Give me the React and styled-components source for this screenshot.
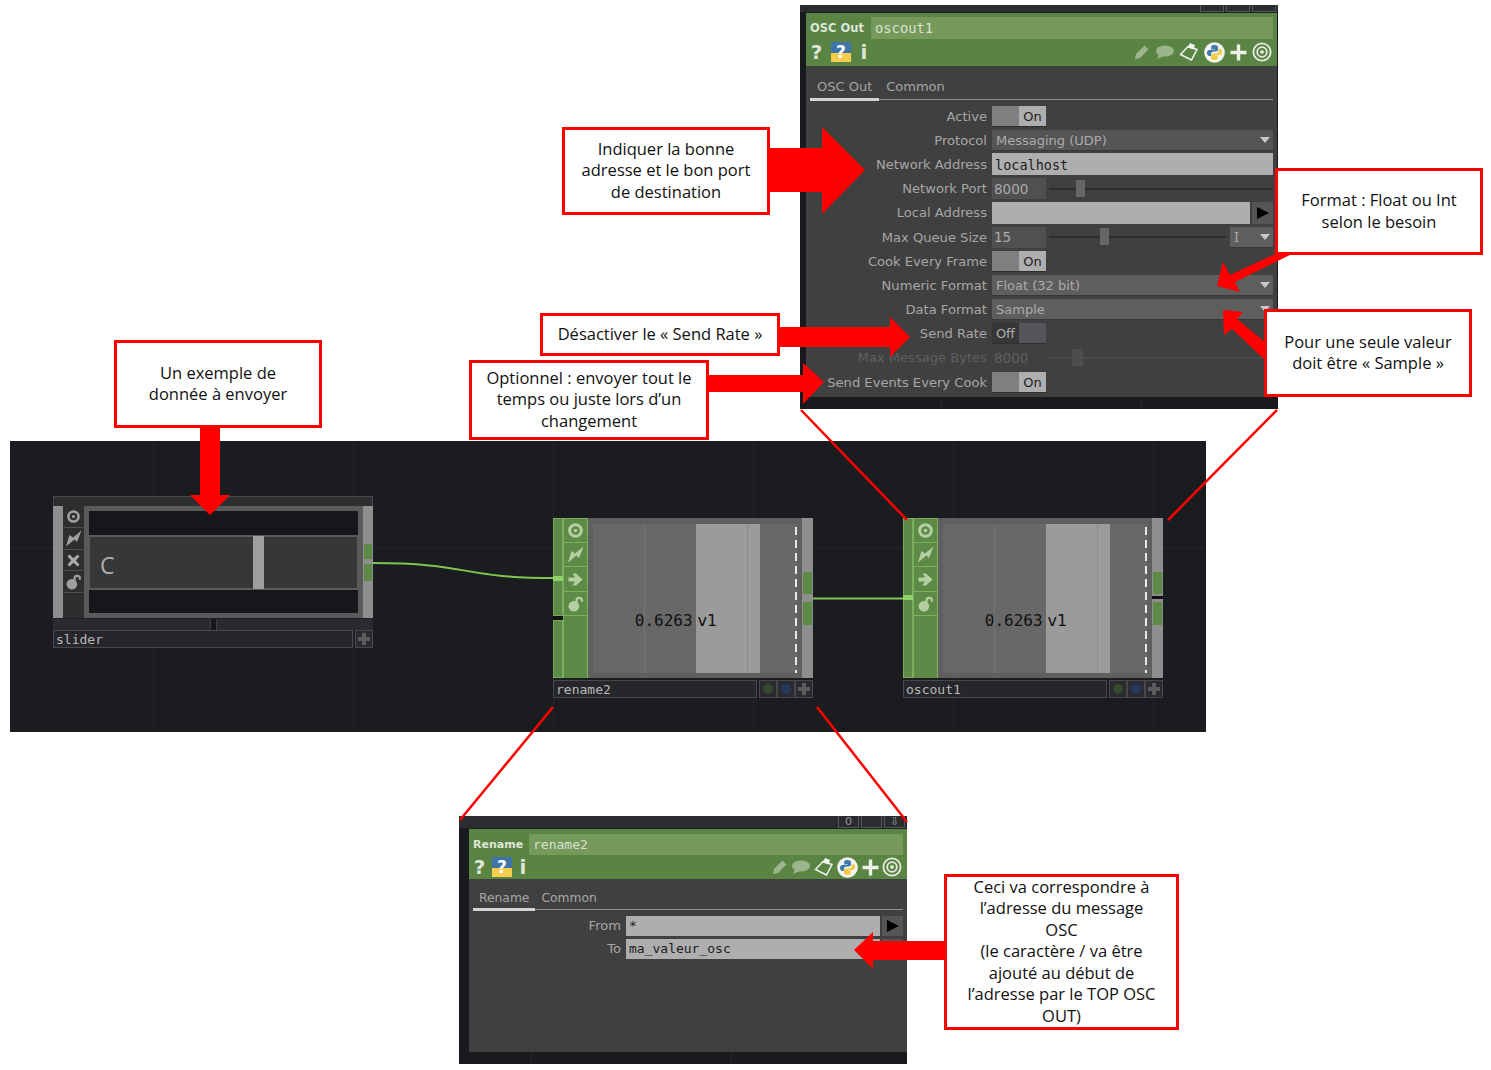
import React from "react";
import styled, { createGlobalStyle } from "styled-components";

const GlobalStyle = createGlobalStyle`
  html, body {
    margin: 0;
    padding: 0;
    background: #fff;
  }
  * {
    box-sizing: border-box;
  }
`;

const Page = styled.div`
  position: relative;
  width: 1491px;
  height: 1070px;
  overflow: hidden;
  background: #fff;
  font-family: "DejaVu Sans", sans-serif;
`;

/* ---------- annotation boxes and arrows ---------- */

const Callout = styled.div`
  position: absolute;
  left: ${(p) => p.$x}px;
  top: ${(p) => p.$y}px;
  width: ${(p) => p.$w}px;
  height: ${(p) => p.$h}px;
  display: flex;
  align-items: center;
  justify-content: center;
  text-align: center;
  padding-bottom: 2px;
  background: #fff;
  border: 3px solid #f00;
  color: #111;
  font-family: "Open Sans", sans-serif;
  font-size: 16.5px;
  line-height: 21.5px;
  white-space: nowrap;
  z-index: 5;
`;

const Overlay = styled.svg`
  position: absolute;
  left: 0;
  top: 0;
  z-index: 4;
  pointer-events: none;
`;

const Wires = styled.svg`
  position: absolute;
  left: 0;
  top: 0;
  z-index: 1;
  pointer-events: none;
`;

/* ---------- parameter window ---------- */

const ParamWindow = styled.div`
  position: absolute;
  left: ${(p) => p.$x}px;
  top: ${(p) => p.$y}px;
  width: ${(p) => p.$w}px;
  height: ${(p) => p.$h}px;
  display: flex;
  flex-direction: column;
  background: #191a1e;
`;

const TitleBar = styled.div`
  height: ${(p) => p.$h}px;
  flex: none;
  display: flex;
  justify-content: flex-end;
  gap: 2px;
  padding-right: 2px;
  background: #2b2c30;
  border-bottom: 1px solid #1d1e21;
`;

const TitleButton = styled.div`
  width: ${(p) => p.$w}px;
  display: flex;
  align-items: flex-end;
  justify-content: center;
  border: 1px solid #55565b;
  border-top: none;
  color: #9a9a9a;
  font-size: 11px;
  line-height: 11px;
`;

const BottomStrip = styled.div`
  flex: none;
  height: 12px;
  background-color: #191a1e;
  background-image: linear-gradient(90deg, #25262b 1px, transparent 1px);
  background-size: 200px 100%;
  background-position: ${(p) => p.$offset}px 0;
`;

const WindowMain = styled.div`
  flex: 1;
  display: flex;
  min-height: 0;
  padding-left: ${(p) => p.$gutter}px;
  padding-right: ${(p) => p.$right}px;
`;

const WindowContent = styled.div`
  flex: 1;
  display: flex;
  flex-direction: column;
  background: #404040;
`;

const Header = styled.div`
  flex: none;
  height: ${(p) => p.$h}px;
  background: #5a8444;
  padding: ${(p) => p.$top}px 4px 0 4px;
  color: #dfe6d9;
`;

const NameRow = styled.div`
  display: flex;
  align-items: center;
  gap: 6px;
  height: ${(p) => p.$h}px;
`;

const OpType = styled.div`
  width: ${(p) => p.$w}px;
  font-size: ${(p) => p.$size}px;
  font-weight: 700;
  white-space: nowrap;
`;

const OpName = styled.div`
  flex: 1;
  height: 100%;
  display: flex;
  align-items: center;
  padding-left: 4px;
  background: #759a5c;
  color: #d8e0d0;
  font-family: "DejaVu Sans Mono", monospace;
  font-size: ${(p) => p.$size}px;
`;

const ToolRow = styled.div`
  display: flex;
  align-items: center;
  justify-content: space-between;
  height: 26px;
  padding: 0 1px;
  margin-top: ${(p) => p.$shift}px;
`;

const ToolGroup = styled.div`
  display: flex;
  align-items: center;
  gap: ${(p) => p.$gap}px;
`;

const HelpGlyph = styled.span`
  font-size: 20px;
  font-weight: 700;
  line-height: 20px;
  width: ${(p) => p.$w}px;
  display: flex;
  justify-content: center;
  color: #dfe6d9;
`;

const PythonTile = styled.div`
  width: 20px;
  height: 20px;
  display: flex;
  align-items: center;
  justify-content: center;
  background: linear-gradient(#3d75a8 0 55%, #f6cd4c 55% 100%);
  color: #fff;
  font-size: 17px;
  font-weight: 700;
`;

const Tabs = styled.div`
  flex: none;
  display: flex;
  height: ${(p) => p.$h}px;
  margin: 0 4px;
  align-items: flex-end;
  border-bottom: 1px solid #8c8c8c;
  font-size: ${(p) => p.$size}px;
  color: #a6a6a6;
`;

const Tab = styled.div`
  height: 100%;
  display: flex;
  align-items: center;
  padding: 6px ${(p) => p.$pad}px 0 ${(p) => p.$pad}px;
  border-bottom: ${(p) => (p.$active ? "3px solid #d4d4d4" : "none")};
  margin-bottom: -2px;
  padding-bottom: ${(p) => (p.$active ? "0" : "3px")};
`;

const ParamList = styled.div`
  display: grid;
  grid-auto-rows: ${(p) => p.$rowH}px;
  padding: ${(p) => p.$top}px 4px 0 0;
`;

const ParamRowBox = styled.div`
  display: grid;
  grid-template-columns: ${(p) => p.$label}px 1fr;
  column-gap: 5px;
  align-items: center;
`;

const ParamLabel = styled.div`
  text-align: right;
  font-size: 13.1px;
  white-space: nowrap;
  color: ${(p) => (p.$dim ? "#5f5f5f" : "#a6a6a6")};
`;

const ParamValue = styled.div`
  display: flex;
  align-items: center;
  gap: 2px;
  min-width: 0;
`;

const ToggleBox = styled.div`
  width: 54px;
  height: 21px;
  display: flex;
  font-size: 13px;
  border: 1px solid #2f2f2f;
  border-width: 0 0 1px 0;
`;

const ToggleHalf = styled.div`
  flex: 1;
  display: flex;
  align-items: center;
  justify-content: center;
  padding-top: 1px;
  background: ${(p) => p.$bg};
  color: ${(p) => p.$color || "#222"};
`;

const SelectBox = styled.div`
  flex: 1;
  height: 21px;
  position: relative;
  display: flex;
  align-items: center;
  padding: 1px 0 0 4px;
  background: ${(p) => p.$bg || "#5e5e5e"};
  border: 1px solid #383838;
  border-width: 0 0 1px 0;
  color: #ababab;
  font-size: 13px;
  &::after {
    content: "";
    position: absolute;
    right: 3px;
    top: 7px;
    border-style: solid;
    border-width: 6px 5.5px 0 5.5px;
    border-color: #c8c8c8 transparent transparent transparent;
  }
`;

const SmallSelect = styled(SelectBox)`
  flex: none;
  width: 43px;
  margin-left: 2px;
  font-family: "DejaVu Serif", serif;
`;

const TextField = styled.div`
  flex: 1;
  height: ${(p) => p.$h || 22}px;
  display: flex;
  align-items: center;
  padding: ${(p) => (p.$h ? 0 : 1)}px 0 0 3px;
  background: #aeaeae;
  color: #1d1d1d;
  font-family: "DejaVu Sans Mono", monospace;
  font-size: ${(p) => p.$size || 13.5}px;
  overflow: hidden;
`;

const RunButton = styled.div`
  flex: none;
  width: 21px;
  height: ${(p) => p.$h || 22}px;
  display: flex;
  align-items: center;
  justify-content: center;
  background: #555;
  &::before {
    content: "";
    border-style: solid;
    border-width: 6px 0 6px 12px;
    border-color: transparent transparent transparent #000;
  }
`;

const NumField = styled.div`
  flex: none;
  width: 54px;
  height: 21px;
  display: flex;
  align-items: center;
  padding-left: 2px;
  background: ${(p) => (p.$dim ? "transparent" : "#505050")};
  color: ${(p) => (p.$dim ? "#5f5f5f" : "#ababab")};
  font-size: 13.5px;
`;

const SliderTrack = styled.div`
  flex: 1;
  height: 2px;
  margin-left: 1px;
  position: relative;
  background: ${(p) => (p.$dim ? "#4a4a4a" : "#2d2d2d")};
`;

const SliderThumb = styled.div`
  position: absolute;
  left: ${(p) => p.$at}px;
  top: -8px;
  width: ${(p) => p.$w || 9}px;
  height: 17px;
  background: ${(p) => (p.$dim ? "#4d4d4d" : "#666")};
`;

const ParamRow = ({ label, dim, width, children }) => (
  <ParamRowBox $label={width}>
    <ParamLabel $dim={dim}>{label}</ParamLabel>
    <ParamValue>{children}</ParamValue>
  </ParamRowBox>
);

const ToggleOn = () => (
  <ToggleBox>
    <ToggleHalf $bg="#7f7f7f" />
    <ToggleHalf $bg="#aeaeae">On</ToggleHalf>
  </ToggleBox>
);

const ToggleOff = () => (
  <ToggleBox>
    <ToggleHalf $bg="#363636" $color="#b0b0b0">Off</ToggleHalf>
    <ToggleHalf $bg="#55555c" />
  </ToggleBox>
);

/* ---------- little drawings ---------- */

const TargetIcon = ({ size = 20, color = "#e6ebe2", ring = 1.8 }) => (
  <svg width={size} height={size} viewBox="0 0 20 20" fill="none" stroke={color}>
    <circle cx="10" cy="10" r="8.6" strokeWidth={ring} />
    <circle cx="10" cy="10" r="4.8" strokeWidth="1.8" />
    <circle cx="10" cy="10" r="1.6" fill={color} strokeWidth="0.6" />
  </svg>
);

const NodeTarget = ({ size, color }) => (
  <svg width={size} height={size} viewBox="0 0 20 20" fill="none" stroke={color}>
    <circle cx="10" cy="10" r="7.8" strokeWidth="4" />
    <circle cx="10" cy="10" r="2.4" fill={color} strokeWidth="0" />
  </svg>
);

const PencilIcon = () => (
  <svg width="16" height="16" viewBox="0 0 16 16" fill="#9db58c">
    <path d="M1 15 L2 10 L10.5 1.5 L14.5 5.5 L6 14 Z" />
  </svg>
);

const BubbleIcon = () => (
  <svg width="19" height="14" viewBox="0 0 19 14" fill="#9db58c">
    <ellipse cx="10" cy="6" rx="9" ry="5.5" />
    <path d="M4 9 L2 14 L9 11 Z" />
  </svg>
);

const ClipboardIcon = () => (
  <svg width="20" height="18" viewBox="0 0 20 18" fill="none" stroke="#f2f4ef" strokeWidth="1.5">
    <path d="M1.5 11.5 L9 3.5 L18 6.5 L12.5 17 Z" />
    <path d="M9.5 4 L11.5 1 L15 2.5 L14.5 5.5 Z" fill="#f2f4ef" />
  </svg>
);

const PythonIcon = () => (
  <svg width="21" height="21" viewBox="0 0 21 21">
    <circle cx="10.5" cy="10.5" r="10.3" fill="#f4f4ee" />
    <path d="M10.4 3 C7.6 3 7.2 4.2 7.2 5.4 V7.4 H10.8 V8.1 H5.6 C4 8.1 3 9.2 3 11 C3 12.8 4 13.9 5.4 13.9 H6.9 V12 C6.9 10.6 8 9.6 9.4 9.6 H12 C13.2 9.6 14 8.8 14 7.6 V5.4 C14 4 12.8 3 10.4 3 Z" fill="#3d78ad" />
    <path d="M10.6 18 C13.4 18 13.8 16.8 13.8 15.6 V13.6 H10.2 V12.9 H15.4 C17 12.9 18 11.8 18 10 C18 8.2 17 7.1 15.6 7.1 H14.8 V9 C14.8 10.4 13.7 11.4 12.3 11.4 H9 C7.8 11.4 7 12.2 7 13.4 V15.6 C7 17 8.2 18 10.6 18 Z" fill="#f5c93d" />
  </svg>
);

const PlusIcon = () => (
  <svg width="17" height="17" viewBox="0 0 17 17" fill="#eef1ea">
    <path d="M6.8 0.5 H10.2 V6.8 H16.5 V10.2 H10.2 V16.5 H6.8 V10.2 H0.5 V6.8 H6.8 Z" />
  </svg>
);

const BoltIcon = ({ color }) => (
  <svg width="17" height="17" viewBox="0 0 17 17" fill={color}>
    <path d="M16.5 0.5 L12 12 L9.5 9.5 L1 16.5 L4.5 5 L8 7.5 Z" />
  </svg>
);

const ArrowIcon = ({ color }) => (
  <svg width="15" height="15" viewBox="0 0 15 15" fill={color}>
    <path d="M0.5 5.5 H7 L4.5 1.5 H8 L14.5 7.5 L8 13.5 H4.5 L7 9.5 H0.5 Z" />
  </svg>
);

const CrossIcon = ({ color }) => (
  <svg width="13" height="13" viewBox="0 0 13 13" fill={color}>
    <path d="M2.5 0.5 L6.5 4.2 L10.5 0.5 L12.5 2.5 L8.8 6.5 L12.5 10.5 L10.5 12.5 L6.5 8.8 L2.5 12.5 L0.5 10.5 L4.2 6.5 L0.5 2.5 Z" />
  </svg>
);

const LockIcon = ({ color }) => (
  <svg width="16" height="16" viewBox="0 0 15 15">
    <circle cx="5.5" cy="9.6" r="5" fill={color} />
    <path d="M8 6.5 V4 C8 1 13 1 13 4 V5.5" fill="none" stroke={color} strokeWidth="2" />
  </svg>
);

const HeaderTools = ({ leftGap, rightGap, shift }) => (
  <ToolRow $shift={shift}>
    <ToolGroup $gap={leftGap}>
      <HelpGlyph $w={11}>?</HelpGlyph>
      <PythonTile>?</PythonTile>
      <HelpGlyph $w={8}>i</HelpGlyph>
    </ToolGroup>
    <ToolGroup $gap={rightGap}>
      <PencilIcon />
      <BubbleIcon />
      <ClipboardIcon />
      <PythonIcon />
      <PlusIcon />
      <TargetIcon size={20} />
    </ToolGroup>
  </ToolRow>
);

/* ---------- network editor and nodes ---------- */

const NetworkEditor = styled.div`
  position: absolute;
  left: 10px;
  top: 441px;
  width: 1196px;
  height: 291px;
  background-color: #1b1c20;
  background-image:
    linear-gradient(90deg, #25262b 1px, transparent 1px),
    linear-gradient(#25262b 1px, transparent 1px);
  background-size: 200px 200px;
  background-position: 143px 107px;
`;

const OpNode = styled.div`
  position: absolute;
  left: ${(p) => p.$x}px;
  top: ${(p) => p.$y}px;
  width: ${(p) => p.$w}px;
  display: flex;
  flex-direction: column;
  z-index: 2;
`;

const OpBody = styled.div`
  height: ${(p) => p.$h}px;
  display: flex;
  background: #5f5f5f;
`;

const LeftStrip = styled.div`
  flex: none;
  width: 10px;
  display: flex;
  flex-direction: column;
  gap: ${(p) => p.$gap || 0}px;
  background: #111;
`;

const StripPiece = styled.div`
  position: relative;
  flex: ${(p) => (p.$h ? `0 0 ${p.$h}px` : 1)};
  background: #5d8a47;
  border: 1px solid #76ad58;
`;

const StripHighlight = styled.div`
  position: absolute;
  left: -1px;
  right: -1px;
  top: ${(p) => p.$top}px;
  height: 5px;
  background: #8ed269;
`;

const IconColumn = styled.div`
  flex: none;
  width: ${(p) => p.$w}px;
  display: flex;
  flex-direction: column;
  background: ${(p) => p.$bg};
  border: ${(p) => p.$line} solid 1px;
  border-top: none;
  border-bottom: none;
`;

const IconCell = styled.div`
  flex: none;
  height: ${(p) => p.$h}px;
  display: flex;
  align-items: center;
  justify-content: center;
  border-bottom: 1px solid ${(p) => p.$line};
  border-top: ${(p) => (p.$first ? `1px solid ${p.$line}` : "none")};
`;

const Viewer = styled.div`
  flex: 1;
  padding: 6px 5px 5px 5px;
  min-width: 0;
`;

const Chart = styled.div`
  position: relative;
  height: 100%;
  display: flex;
  align-items: center;
  justify-content: center;
  padding: 44px 38px 0 0;
  background:
    linear-gradient(90deg,
      transparent 51px, #757575 51px 52px, transparent 52px 103px,
      #9b9b9b 103px 154px, #8b8b8b 154px 155px, #9b9b9b 155px 167px, transparent 167px),
    #686868;
  &::after {
    content: "";
    position: absolute;
    right: 0;
    top: 3px;
    bottom: 0;
    width: 2px;
    background: repeating-linear-gradient(#e8e8e8 0 8px, transparent 8px 13px);
  }
`;

const ChartValue = styled.div`
  color: #111;
  font-size: 16px;
  white-space: nowrap;
  span {
    font-family: "DejaVu Sans Mono", monospace;
    font-size: 16px;
    margin-right: 5px;
  }
`;

const RightStrip = styled.div`
  flex: none;
  width: 11px;
  display: flex;
  flex-direction: column;
  gap: ${(p) => p.$gap}px;
  padding: ${(p) => p.$top}px 1px 0 1px;
  background: #8e8e8e;
  position: relative;
`;

const Output = styled.div`
  flex: none;
  height: ${(p) => p.$h}px;
  background: #5d8a47;
`;

const OutputGap = styled.div`
  position: absolute;
  left: 0;
  right: 0;
  top: ${(p) => p.$top}px;
  height: 3px;
  background: #111;
`;

const NameBar = styled.div`
  display: flex;
  height: 18px;
  margin-top: ${(p) => p.$top}px;
`;

const NameField = styled.div`
  flex: 1;
  display: flex;
  align-items: center;
  padding-left: 2px;
  margin-right: 2px;
  border: 1px solid #47484c;
  background: #26272a;
  color: #b8b8b8;
  font-family: "DejaVu Sans Mono", monospace;
  font-size: 13px;
`;

const NameCell = styled.div`
  flex: none;
  width: 18px;
  display: flex;
  align-items: center;
  justify-content: center;
  border: 1px solid #47484c;
  background: #2a2b2e;
`;

const Dot = styled.div`
  width: 10px;
  height: 10px;
  border-radius: 50%;
  background: ${(p) => p.$c};
`;

const CellPlus = styled.div`
  width: 12px;
  height: 12px;
  background:
    linear-gradient(#5c5c5c, #5c5c5c) center / 12px 4px no-repeat,
    linear-gradient(#5c5c5c, #5c5c5c) center / 4px 12px no-repeat;
`;

/* slider node parts */
const SliderCap = styled.div`
  height: 10px;
  background: #2e2e30;
  border: 1px solid #47484c;
  border-bottom: none;
`;

const GreyStrip = styled.div`
  flex: none;
  width: 10px;
  background: #8e8e8e;
`;

const SliderOutputs = styled(RightStrip)`
  width: 10px;
`;

const SliderViewer = styled.div`
  flex: 1;
  display: flex;
  flex-direction: column;
  padding: 5px;
  background: #5a5a5a;
  gap: 1px;
`;

const SliderBand = styled.div`
  flex: 1;
  background: #16171b;
`;

const SliderBody = styled.div`
  flex: 0 0 53px;
  display: flex;
  align-items: center;
  position: relative;
  padding: 5px 0 0 10px;
  background: #373737;
  border: 1px solid #5a5a5a;
  color: #b0b0b0;
  font-family: "Open Sans", sans-serif;
  font-size: 23px;
`;

const SliderKnob = styled.div`
  position: absolute;
  left: 163px;
  top: -1px;
  bottom: -1px;
  width: 11px;
  background: #9e9e9e;
`;

const SliderFoot = styled.div`
  height: 12px;
  display: flex;
  justify-content: center;
  background: #2a2b2e;
  border-top: 1px solid #1e1f22;
`;

const FootHandle = styled.div`
  width: 7px;
  background: #17181b;
  border: solid #3e3e40;
  border-width: 0 1px;
`;

const lineGreen = "#7cb25c";
const iconGreen = "#b4d0a2";

const ViewerNode = ({ x, name, inputs, outputs }) => (
  <OpNode $x={x} $y={77} $w={260}>
    <OpBody $h={160}>
      <LeftStrip $gap={inputs.gap}>
        {inputs.pieces.map((piece, i) => (
          <StripPiece key={i} $h={piece.h}>
            {piece.glow !== undefined && <StripHighlight $top={piece.glow} />}
          </StripPiece>
        ))}
      </LeftStrip>
      <IconColumn $w={25} $bg="#5d8a47" $line={lineGreen}>
        <IconCell $h={25} $line={lineGreen} $first><NodeTarget size={15} color={iconGreen} /></IconCell>
        <IconCell $h={24} $line={lineGreen}><BoltIcon color={iconGreen} /></IconCell>
        <IconCell $h={25} $line={lineGreen}><ArrowIcon color={iconGreen} /></IconCell>
        <IconCell $h={24} $line={lineGreen}><LockIcon color={iconGreen} /></IconCell>
      </IconColumn>
      <Viewer>
        <Chart>
          <ChartValue><span>0.6263</span>v1</ChartValue>
        </Chart>
      </Viewer>
      <RightStrip $gap={8} $top={54}>
        <Output $h={22} />
        <Output $h={23} />
        {outputs.gap && <OutputGap $top={78} />}
      </RightStrip>
    </OpBody>
    <NameBar $top={2}>
      <NameField>{name}</NameField>
      <NameCell><Dot $c="#36492f" /></NameCell>
      <NameCell><Dot $c="#25395f" /></NameCell>
      <NameCell><CellPlus /></NameCell>
    </NameBar>
  </OpNode>
);

const SliderNode = () => (
  <OpNode $x={43} $y={55} $w={320}>
    <SliderCap />
    <OpBody $h={112}>
      <GreyStrip />
      <IconColumn $w={21} $bg="#2e2e2e" $line="#2e2e2e">
        <IconCell $h={22} $line="#515151"><NodeTarget size={13} color="#a0a0a0" /></IconCell>
        <IconCell $h={22} $line="#515151"><BoltIcon color="#a0a0a0" /></IconCell>
        <IconCell $h={21} $line="#515151"><CrossIcon color="#a8a8a8" /></IconCell>
        <IconCell $h={22} $line="#515151"><LockIcon color="#a0a0a0" /></IconCell>
      </IconColumn>
      <SliderViewer>
        <SliderBand />
        <SliderBody>
          C
          <SliderKnob />
        </SliderBody>
        <SliderBand />
      </SliderViewer>
      <SliderOutputs $gap={5} $top={38}>
        <Output $h={15} />
        <Output $h={17} />
      </SliderOutputs>
    </OpBody>
    <SliderFoot>
      <FootHandle />
    </SliderFoot>
    <NameBar $top={0}>
      <NameField>slider</NameField>
      <NameCell><CellPlus /></NameCell>
    </NameBar>
  </OpNode>
);

const App = () => (
  <Page>
    <GlobalStyle />

    <NetworkEditor>
      <SliderNode />
      <ViewerNode
        x={543}
        name="rename2"
        inputs={{
          gap: 4,
          pieces: [{ h: 98, glow: 57 }, {}],
        }}
        outputs={{ gap: false }}
      />
      <ViewerNode
        x={893}
        name="oscout1"
        inputs={{ gap: 0, pieces: [{ glow: 76 }] }}
        outputs={{ gap: true }}
      />
    </NetworkEditor>

    <Wires width="1491" height="1070">
      <path d="M372 563 C470 563 460 578 554 578" fill="none" stroke="#80c552" strokeWidth="2" />
      <path d="M813 598.5 H904" fill="none" stroke="#80c552" strokeWidth="2" />
    </Wires>

    <ParamWindow $x={800} $y={5} $w={478} $h={404}>
      <TitleBar $h={8}>
        <TitleButton $w={24} />
        <TitleButton $w={24} />
        <TitleButton $w={24} />
      </TitleBar>
      <WindowMain $gutter={6} $right={1}>
        <WindowContent>
          <Header $h={53} $top={4}>
            <NameRow $h={22}>
              <OpType $w={55} $size={11.5}>OSC Out</OpType>
              <OpName $size={13.8}>oscout1</OpName>
            </NameRow>
            <HeaderTools leftGap={9} rightGap={5} shift={0} />
          </Header>
          <Tabs $h={34} $size={13}>
            <Tab $active $pad={7}>OSC Out</Tab>
            <Tab $pad={7}>Common</Tab>
          </Tabs>
          <ParamList $top={4} $rowH={24.2}>
            <ParamRow width={181} label="Active"><ToggleOn /></ParamRow>
            <ParamRow width={181} label="Protocol"><SelectBox $bg="#555">Messaging (UDP)</SelectBox></ParamRow>
            <ParamRow width={181} label="Network Address"><TextField>localhost</TextField></ParamRow>
            <ParamRow width={181} label="Network Port">
              <NumField>8000</NumField>
              <SliderTrack><SliderThumb $at={27} /></SliderTrack>
            </ParamRow>
            <ParamRow width={181} label="Local Address"><TextField /><RunButton /></ParamRow>
            <ParamRow width={181} label="Max Queue Size">
              <NumField>15</NumField>
              <SliderTrack><SliderThumb $at={51} /></SliderTrack>
              <SmallSelect $bg="#5e5e5e">I</SmallSelect>
            </ParamRow>
            <ParamRow width={181} label="Cook Every Frame"><ToggleOn /></ParamRow>
            <ParamRow width={181} label="Numeric Format"><SelectBox>Float (32 bit)</SelectBox></ParamRow>
            <ParamRow width={181} label="Data Format"><SelectBox>Sample</SelectBox></ParamRow>
            <ParamRow width={181} label="Send Rate"><ToggleOff /></ParamRow>
            <ParamRow width={181} label="Max Message Bytes" dim>
              <NumField $dim>8000</NumField>
              <SliderTrack $dim><SliderThumb $dim $at={23} $w={11} /></SliderTrack>
            </ParamRow>
            <ParamRow width={181} label="Send Events Every Cook"><ToggleOn /></ParamRow>
          </ParamList>
        </WindowContent>
      </WindowMain>
      <BottomStrip $offset={141} />
    </ParamWindow>

    <ParamWindow $x={459} $y={816} $w={448} $h={248}>
      <TitleBar $h={13}>
        <TitleButton $w={21}>0</TitleButton>
        <TitleButton $w={21} />
        <TitleButton $w={21}>⇩</TitleButton>
      </TitleBar>
      <WindowMain $gutter={10} $right={0}>
        <WindowContent>
          <Header $h={50} $top={5}>
            <NameRow $h={21}>
              <OpType $w={50} $size={11}>Rename</OpType>
              <OpName $size={13}>rename2</OpName>
            </NameRow>
            <HeaderTools leftGap={7} rightGap={3.5} shift={-1} />
          </Header>
          <Tabs $h={31} $size={12.3}>
            <Tab $active $pad={6}>Rename</Tab>
            <Tab $pad={6}>Common</Tab>
          </Tabs>
          <ParamList $top={4} $rowH={23}>
            <ParamRow width={152} label="From"><TextField $h={20} $size={13}>*</TextField><RunButton $h={20} /></ParamRow>
            <ParamRow width={152} label="To"><TextField $h={20} $size={13}>ma_valeur_osc</TextField><RunButton $h={20} /></ParamRow>
          </ParamList>
        </WindowContent>
      </WindowMain>
      <BottomStrip $offset={72} />
    </ParamWindow>

    <Overlay width="1491" height="1070" fill="#f00">
      <g stroke="#f00" strokeWidth="2.5">
        <line x1="801" y1="410" x2="907" y2="520" />
        <line x1="1277" y1="410" x2="1168" y2="520" />
        <line x1="553" y1="707" x2="460" y2="820" />
        <line x1="817" y1="707" x2="907" y2="822" />
      </g>
      <polygon points="770,148 822,148 822,127 865,170 822,214 822,192 770,192" />
      <polygon points="1217,286 1223,262 1230,275 1275,254 1292,254 1235,282 1240,292" />
      <polygon points="1223,310 1243,312 1237,319 1265,342 1265,360 1232,329 1224,335" />
      <polygon points="780,327 890,327 890,317 910,337 890,357 890,347 780,347" />
      <polygon points="709,375 803,375 803,363 824,382 803,404 803,392 709,392" />
      <polygon points="200,428 220,428 220,495 230,495 210,515 190,495 200,495" />
      <polygon points="945,941 873,941 873,932 854,950 873,969 873,960 945,960" />
    </Overlay>

    <Callout $x={562} $y={127} $w={208} $h={88}>
      Indiquer la bonne<br />adresse et le bon port<br />de destination
    </Callout>
    <Callout $x={1275} $y={168} $w={208} $h={87}>
      Format : Float ou Int<br />selon le besoin
    </Callout>
    <Callout $x={1264} $y={309} $w={208} $h={88}>
      Pour une seule valeur<br />doit être « Sample »
    </Callout>
    <Callout $x={540} $y={313} $w={240} $h={43}>
      Désactiver le « Send Rate »
    </Callout>
    <Callout $x={469} $y={360} $w={240} $h={80}>
      Optionnel : envoyer tout le<br />temps ou juste lors d’un<br />changement
    </Callout>
    <Callout $x={114} $y={340} $w={208} $h={88}>
      Un exemple de<br />donnée à envoyer
    </Callout>
    <Callout $x={944} $y={874} $w={235} $h={156}>
      <div>
        Ceci va correspondre à<br />l’adresse du message<br />OSC<br />(le caractère / va être<br />ajouté au début de<br />l’adresse par le TOP OSC<br />OUT)
      </div>
    </Callout>
  </Page>
);

export default App;
